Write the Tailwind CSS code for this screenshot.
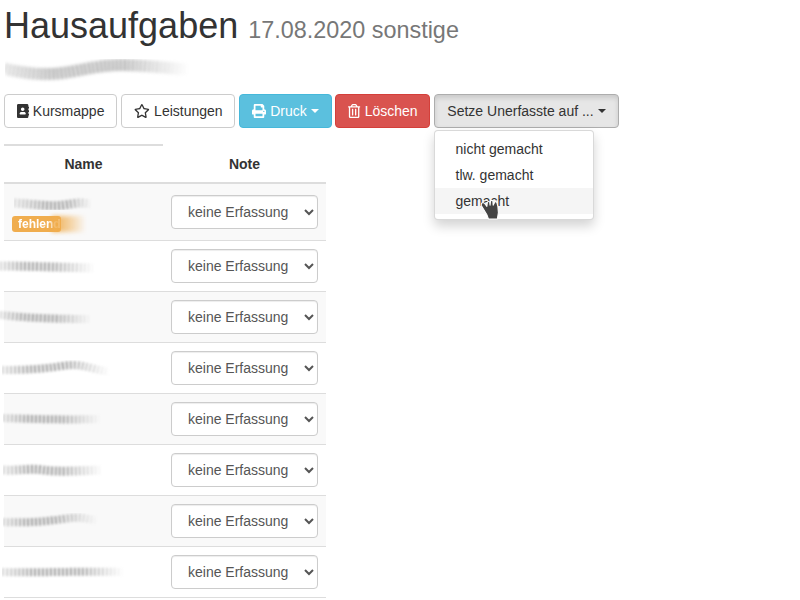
<!DOCTYPE html>
<html lang="de">
<head>
    <meta charset="UTF-8">
    <title>Hausaufgaben</title>
    <script src="https://cdn.jsdelivr.net/npm/@tailwindcss/browser@4"></script>
</head>
<body class="bg-white text-[#333] text-[14px] leading-[20px] font-['Liberation_Sans',Arial,sans-serif] overflow-hidden h-[600px]">
    <div class="px-1">
        <h1 class="pt-[6px] text-[36px] leading-[40px] text-[#333]">Hausaufgaben <small class="text-[23.4px] text-[#777]">17.08.2020 sonstige</small></h1>

        <!-- Redacted teacher name -->
        <svg class="mt-[9px] mb-[11px] ml-[1px] w-[184px] h-[24px] blur-[1.5px] [mask-image:linear-gradient(90deg,#0007,#000_25%,#000_65%,transparent)]" viewBox="0 0 184 24" fill="none"><path d="M0 10C20 14 40 18 70 12S110 5 140 7 170 10 184 10" stroke="#999" stroke-width="12" stroke-dasharray="2 2"/></svg>

        <!-- Toolbar -->
        <div class="flex gap-1 h-[34px]">
            <button class="flex items-center gap-[4px] h-[34px] w-[113px] justify-center border border-[#ccc] rounded bg-white text-[#333]">
                <svg class="w-[12.25px] h-[14px]" viewBox="0 0 448 512" fill="#333"><path d="M436 160c6.6 0 12-5.4 12-12v-40c0-6.6-5.4-12-12-12h-20V48c0-26.5-21.5-48-48-48H48C21.5 0 0 21.5 0 48v416c0 26.5 21.5 48 48 48h320c26.5 0 48-21.5 48-48v-48h20c6.6 0 12-5.4 12-12v-40c0-6.6-5.4-12-12-12h-20v-64h20c6.6 0 12-5.4 12-12v-40c0-6.6-5.4-12-12-12h-20v-64h20zm-228-32c35.3 0 64 28.7 64 64s-28.7 64-64 64-64-28.7-64-64 28.7-64 64-64zm112 236.8c0 10.6-10 19.2-22.4 19.2H118.4C106 384 96 375.4 96 364.8v-19.2c0-31.8 30.1-57.6 67.2-57.6h5c12.3 5.1 25.7 8 39.8 8s27.6-2.9 39.8-8h5c37.1 0 67.2 25.8 67.2 57.6v19.2z"/></svg>
                Kursmappe
            </button>
            <button class="flex items-center gap-[4px] pl-[1px] h-[34px] w-[114px] justify-center border border-[#ccc] rounded bg-white text-[#333]">
                <svg class="w-[15.75px] h-[14px]" viewBox="0 0 576 512" fill="#333"><path d="M528.1 171.5L382 150.2 316.7 17.8c-11.7-23.6-45.6-23.9-57.4 0L194 150.2 47.9 171.5c-26.2 3.8-36.7 36.1-17.7 54.6l105.7 103-25 145.5c-4.5 26.3 23.2 46 46.4 33.7L288 439.6l130.7 68.7c23.2 12.2 50.9-7.4 46.4-33.7l-25-145.5 105.7-103c19-18.5 8.5-50.8-17.7-54.6zM388.6 312.3l23.7 138.4L288 385.4l-124.3 65.3 23.7-138.4-100.6-98 139-20.2 62.2-126 62.2 126 139 20.2-100.6 98z"/></svg>
                Leistungen
            </button>
            <button class="flex items-center gap-[4px] h-[34px] w-[93px] justify-center border border-[#46b8da] rounded bg-[#5bc0de] text-white">
                <svg class="w-[14px] h-[14px]" viewBox="0 0 512 512" fill="#fff"><path d="M448 192V77.25c0-8.49-3.37-16.62-9.37-22.63L393.37 9.37c-6-6-14.14-9.37-22.63-9.37H96C78.33 0 64 14.33 64 32v160c-35.35 0-64 28.65-64 64v112c0 8.84 7.16 16 16 16h48v96c0 17.67 14.33 32 32 32h320c17.67 0 32-14.33 32-32v-96h48c8.84 0 16-7.16 16-16V256c0-35.35-28.65-64-64-64zm-64 256H128v-96h256v96zm0-224H128V64h192v48c0 8.84 7.16 16 16 16h48v96zm48 72c-13.25 0-24-10.75-24-24 0-13.26 10.75-24 24-24s24 10.74 24 24c0 13.25-10.75 24-24 24z"/></svg>
                Druck
                <span class="w-0 h-0 border-x-[4px] border-x-transparent border-t-[4px] border-t-white"></span>
            </button>
            <button class="flex items-center gap-[4px] pl-[1px] h-[34px] w-[95px] -ml-[1px] justify-center border border-[#d43f3a] rounded bg-[#d9534f] text-white">
                <svg class="w-[12.25px] h-[14px]" viewBox="0 0 448 512" fill="#fff"><path d="M268 416h24a12 12 0 0 0 12-12V188a12 12 0 0 0-12-12h-24a12 12 0 0 0-12 12v216a12 12 0 0 0 12 12zM432 80h-82.41l-34-56.7A48 48 0 0 0 274.41 0H173.59a48 48 0 0 0-41.16 23.3L98.41 80H16A16 16 0 0 0 0 96v16a16 16 0 0 0 16 16h16v336a48 48 0 0 0 48 48h288a48 48 0 0 0 48-48V128h16a16 16 0 0 0 16-16V96a16 16 0 0 0-16-16zM171.84 50.91A6 6 0 0 1 177 48h94a6 6 0 0 1 5.15 2.91L293.61 80H154.39zM368 464H80V128h288zm-212-48h24a12 12 0 0 0 12-12V188a12 12 0 0 0-12-12h-24a12 12 0 0 0-12 12v216a12 12 0 0 0 12 12z"/></svg>
                Löschen
            </button>
            <div class="relative">
                <button class="flex items-center gap-[4px] h-[34px] w-[185px] justify-center border border-[#adadad] rounded bg-[#e6e6e6] text-[#333] shadow-[inset_0_3px_5px_rgba(0,0,0,0.125)]">
                    Setze Unerfasste auf ...
                    <span class="w-0 h-0 border-x-[4px] border-x-transparent border-t-[4px] border-t-[#333]"></span>
                </button>
                <!-- Open dropdown -->
                <ul class="absolute z-10 left-0 top-[36px] w-[160px] py-[5px] bg-white border border-black/15 rounded shadow-[0_6px_12px_rgba(0,0,0,0.175)]">
                    <li class="pl-[20.5px] h-[26px] leading-[26px]">nicht gemacht</li>
                    <li class="pl-[20.5px] h-[26px] leading-[26px]">tlw. gemacht</li>
                    <li class="pl-[20.5px] h-[26px] leading-[26px] bg-[#f5f5f5]">gemacht</li>
                </ul>
                <!-- Hand cursor -->
                <svg class="absolute z-20 left-[45px] top-[104px] w-[21px] h-[23px]" viewBox="0 0 20 22">
                    <path d="M2.500 5C3.500 4 5 4.500 5.500 5.500L7.500 8 8 4C8.200 3 10 3 10.200 4L10.500 7 11 3C11.200 2 13 2 13.200 3L13.500 7 15 4C15.500 3 17 3.500 17 4.500L18 8 18.500 14 17.500 20H9L7.500 16 2 7Z" fill="#444" stroke="#fff" stroke-width="1" stroke-linejoin="round"/>
                </svg>
            </div>
        </div>

        <!-- Table -->
        <table class="mt-[16px] w-[322px] border-collapse table-fixed">
            <thead>
                <tr class="h-[38px]">
                    <th class="w-[159px] border-t-2 border-t-[#ddd] border-b-2 border-b-[#ddd] font-bold text-center align-middle">Name</th>
                    <th class="border-b-2 border-b-[#ddd] font-bold text-center align-middle">Note</th>
                </tr>
            </thead>
            <tbody>
                <tr class="h-[57px] bg-[#f9f9f9] border-b border-b-[#ddd]">
                    <td class="align-middle">
                        <svg class="ml-[10px] w-[78px] h-[18px] blur-[1px] [mask-image:linear-gradient(90deg,#0005,#000_40%,#000_70%,transparent)]" viewBox="0 0 78 18" fill="none"><path d="M0 11C20 12 35 15 50 13S65 10 78 12" stroke="#999" stroke-width="9" stroke-dasharray="2 2"/></svg>
                        <div class="relative mt-[6px] ml-[8px] w-[49px] h-[16px] rounded-[3px] bg-[#f0ad4e] text-white text-[12px] leading-[16px] font-bold pl-[6px]">
                            <span class="blur-[0.5px]">fehlend</span>
                            <div class="absolute left-[40px] top-0 w-[34px] h-[16px] blur-[2px] bg-[linear-gradient(90deg,#f0ad4e,#f0ad4e88_50%,transparent)]"></div>
                        </div>
                    </td>
                    <td class="px-2 align-middle"><select class="w-[147px] h-[34px] px-3 bg-white border border-[#ccc] rounded text-[#555] shadow-[inset_0_1px_1px_rgba(0,0,0,0.075)]"><option>keine Erfassung</option></select></td>
                </tr>
                <tr class="h-[51px] border-b border-b-[#ddd]">
                    <td class="align-middle">
                        <svg class="-ml-[4px] w-[95px] h-[16px] blur-[1px] [mask-image:linear-gradient(90deg,#0006,#000_25%,#000_55%,transparent)]" viewBox="0 0 95 16" fill="none"><path d="M0 8C25 8 50 9 95 10" stroke="#999" stroke-width="9" stroke-dasharray="2 2"/></svg>
                    </td>
                    <td class="px-2 align-middle"><select class="w-[147px] h-[34px] px-3 bg-white border border-[#ccc] rounded text-[#555] shadow-[inset_0_1px_1px_rgba(0,0,0,0.075)]"><option>keine Erfassung</option></select></td>
                </tr>
                <tr class="h-[51px] bg-[#f9f9f9] border-b border-b-[#ddd]">
                    <td class="align-middle">
                        <svg class="-ml-[4px] w-[92px] h-[16px] blur-[1px] [mask-image:linear-gradient(90deg,#0006,#000_25%,#000_60%,transparent)]" viewBox="0 0 92 16" fill="none"><path d="M0 6C20 8 40 10 92 10" stroke="#999" stroke-width="8" stroke-dasharray="2 2"/></svg>
                    </td>
                    <td class="px-2 align-middle"><select class="w-[147px] h-[34px] px-3 bg-white border border-[#ccc] rounded text-[#555] shadow-[inset_0_1px_1px_rgba(0,0,0,0.075)]"><option>keine Erfassung</option></select></td>
                </tr>
                <tr class="h-[51px] border-b border-b-[#ddd]">
                    <td class="align-middle">
                        <svg class="-ml-[2px] w-[108px] h-[16px] blur-[1px] [mask-image:linear-gradient(90deg,#0006,#000_25%,#000_60%,transparent)]" viewBox="0 0 108 16" fill="none"><path d="M0 10C25 10 40 9 60 6S85 8 108 12" stroke="#999" stroke-width="8" stroke-dasharray="2 2"/></svg>
                    </td>
                    <td class="px-2 align-middle"><select class="w-[147px] h-[34px] px-3 bg-white border border-[#ccc] rounded text-[#555] shadow-[inset_0_1px_1px_rgba(0,0,0,0.075)]"><option>keine Erfassung</option></select></td>
                </tr>
                <tr class="h-[51px] bg-[#f9f9f9] border-b border-b-[#ddd]">
                    <td class="align-middle">
                        <svg class="-ml-[1px] w-[98px] h-[16px] blur-[1px] [mask-image:linear-gradient(90deg,#0006,#000_25%,#000_60%,transparent)]" viewBox="0 0 98 16" fill="none"><path d="M0 7C30 8 60 9 98 8" stroke="#999" stroke-width="8" stroke-dasharray="2 2"/></svg>
                    </td>
                    <td class="px-2 align-middle"><select class="w-[147px] h-[34px] px-3 bg-white border border-[#ccc] rounded text-[#555] shadow-[inset_0_1px_1px_rgba(0,0,0,0.075)]"><option>keine Erfassung</option></select></td>
                </tr>
                <tr class="h-[51px] border-b border-b-[#ddd]">
                    <td class="align-middle">
                        <svg class="-ml-[1px] w-[100px] h-[16px] blur-[1px] [mask-image:linear-gradient(90deg,#0006,#000_25%,#000_60%,transparent)]" viewBox="0 0 100 16" fill="none"><path d="M0 8C15 9 25 6 40 8S70 9 100 8" stroke="#999" stroke-width="9" stroke-dasharray="2 2"/></svg>
                    </td>
                    <td class="px-2 align-middle"><select class="w-[147px] h-[34px] px-3 bg-white border border-[#ccc] rounded text-[#555] shadow-[inset_0_1px_1px_rgba(0,0,0,0.075)]"><option>keine Erfassung</option></select></td>
                </tr>
                <tr class="h-[51px] bg-[#f9f9f9] border-b border-b-[#ddd]">
                    <td class="align-middle">
                        <svg class="-ml-[1px] w-[95px] h-[16px] blur-[1px] [mask-image:linear-gradient(90deg,#0006,#000_25%,#000_55%,transparent)]" viewBox="0 0 95 16" fill="none"><path d="M0 9C20 10 40 9 60 6S80 6 95 7" stroke="#999" stroke-width="8" stroke-dasharray="2 2"/></svg>
                    </td>
                    <td class="px-2 align-middle"><select class="w-[147px] h-[34px] px-3 bg-white border border-[#ccc] rounded text-[#555] shadow-[inset_0_1px_1px_rgba(0,0,0,0.075)]"><option>keine Erfassung</option></select></td>
                </tr>
                <tr class="h-[51px] border-b border-b-[#ddd]">
                    <td class="align-middle">
                        <svg class="-ml-[2px] w-[122px] h-[16px] blur-[1px] [mask-image:linear-gradient(90deg,#0006,#000_25%,#000_65%,transparent)]" viewBox="0 0 122 16" fill="none"><path d="M0 8C40 9 70 7 122 8" stroke="#999" stroke-width="8" stroke-dasharray="2 2"/></svg>
                    </td>
                    <td class="px-2 align-middle"><select class="w-[147px] h-[34px] px-3 bg-white border border-[#ccc] rounded text-[#555] shadow-[inset_0_1px_1px_rgba(0,0,0,0.075)]"><option>keine Erfassung</option></select></td>
                </tr>
            </tbody>
        </table>
    </div>
</body>
</html>
